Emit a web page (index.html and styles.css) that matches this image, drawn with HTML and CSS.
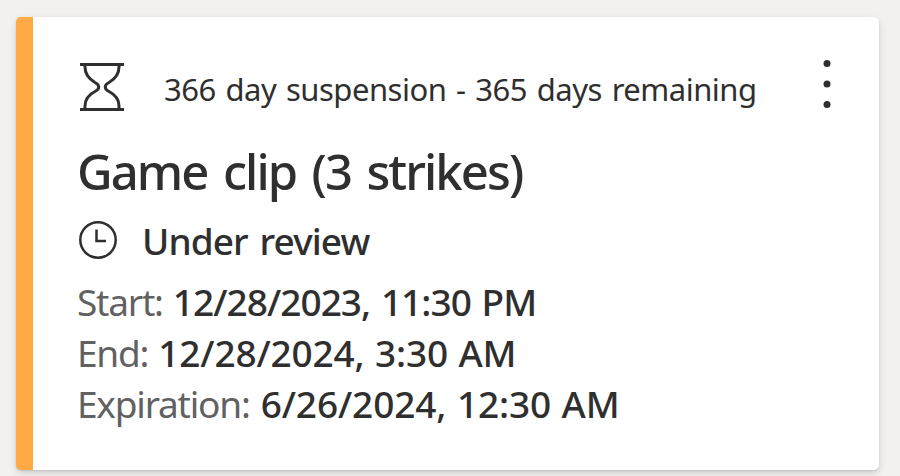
FILE: index.html
```
<!DOCTYPE html>
<html lang="en">
<head>
    <meta charset="UTF-8">
    <meta name="viewport" content="width=device-width, initial-scale=1.0">
    <title>Enforcement history</title>
    <link rel="stylesheet" href="styles.css">
</head>
<body>
    <div class="card">
        <div class="card-header">
            <svg class="hourglass" viewBox="0 0 44 48" fill="none" stroke="#2f2f2f" stroke-width="3">
                <path d="M0 1.5H44M0 46.5H44"/>
                <path d="M5 2V4C5 12 9 16 15 19.500C20 22 20 26 15 28.500C9 31.500 5 36 5 43V46"/>
                <path d="M39 2V4C39 12 35 16 29 19.500C24 22 24 26 29 28.500C35 31.500 39 36 39 43V46"/>
            </svg>
            <p class="summary">366 day suspension - 365 days remaining</p>
            <button class="menu-btn" aria-label="More options">
                <svg width="8" height="48" viewBox="0 0 8 48" fill="#2f2f2f">
                    <circle cx="4" cy="3.500" r="3.500"/>
                    <circle cx="4" cy="24" r="3.500"/>
                    <circle cx="4" cy="44.500" r="3.500"/>
                </svg>
            </button>
        </div>
        <h2 class="title">Game clip (3 strikes)</h2>
        <div class="status">
            <svg class="clock" viewBox="0 0 38 38" fill="none" stroke="#2f2f2f" stroke-width="2.500">
                <circle cx="19" cy="19" r="17.700"/>
                <path d="M17.500 8.500V20H27"/>
            </svg>
            <span class="status-text">Under review</span>
        </div>
        <div class="dates">
            <p><span class="label">Start:</span><span class="value value-start">12/28/2023, 11:30 PM</span></p>
            <p><span class="label">End:</span><span class="value">12/28/2024, 3:30 AM</span></p>
            <p><span class="label">Expiration:</span><span class="value value-expiration">6/26/2024, 12:30 AM</span></p>
        </div>
    </div>
</body>
</html>
```
FILE: styles.css
```
* {
    box-sizing: border-box;
}
body {
    font-family: "Segoe UI", "Noto Sans", sans-serif;
    background-color: #f2f1f0;
    color: #2f2f2f;
    height: 476px;
    margin: 0;
    padding: 17px 21px 6px 16px;
    overflow: hidden;
}
h2, p {
    margin: 0;
    white-space: nowrap;
}
.card {
    height: 453px;
    padding: 43px 48px 0 44px;
    background-color: #fff;
    border-left: 17px solid #ffaa44;
    border-radius: 5px;
    box-shadow: 0 3px 7px rgba(0, 0, 0, 0.14), 0 1px 2px rgba(0, 0, 0, 0.1);
}
.card-header {
    display: flex;
    align-items: flex-start;
    height: 60px;
}
.hourglass {
    width: 44px;
    height: 48px;
    margin: 3px 0 0 3px;
}
.summary {
    margin-left: 40px;
    font-size: 31px;
    line-height: 58px;
    letter-spacing: -0.5px;
    word-spacing: 2.2px;
}
.menu-btn {
    display: flex;
    margin-left: auto;
    padding: 0;
    border: none;
    background: none;
    cursor: pointer;
}
.title {
    margin-top: 16px;
    font-size: 49px;
    font-weight: 500;
    line-height: 70px;
    letter-spacing: -1.9px;
    word-spacing: 4.5px;
}
.status {
    display: flex;
    align-items: center;
    height: 54px;
    margin-top: 7px;
}
.clock {
    width: 38px;
    height: 38px;
    margin-left: 2px;
}
.status-text {
    margin-left: 25px;
    font-size: 37px;
    font-weight: 500;
    letter-spacing: -0.9px;
    word-spacing: 3px;
}
.dates {
    margin-top: 9px;
    font-size: 37px;
    line-height: 51px;
}
.dates p {
    display: flex;
    gap: 10px;
}
.label {
    color: #616161;
    letter-spacing: -1.2px;
}
.value {
    font-weight: 500;
    letter-spacing: -0.15px;
    word-spacing: 1px;
}
.value-start {
    letter-spacing: -0.95px;
    word-spacing: 2px;
}
.value-expiration {
    margin-left: 1px;
    letter-spacing: -0.1px;
}
```
